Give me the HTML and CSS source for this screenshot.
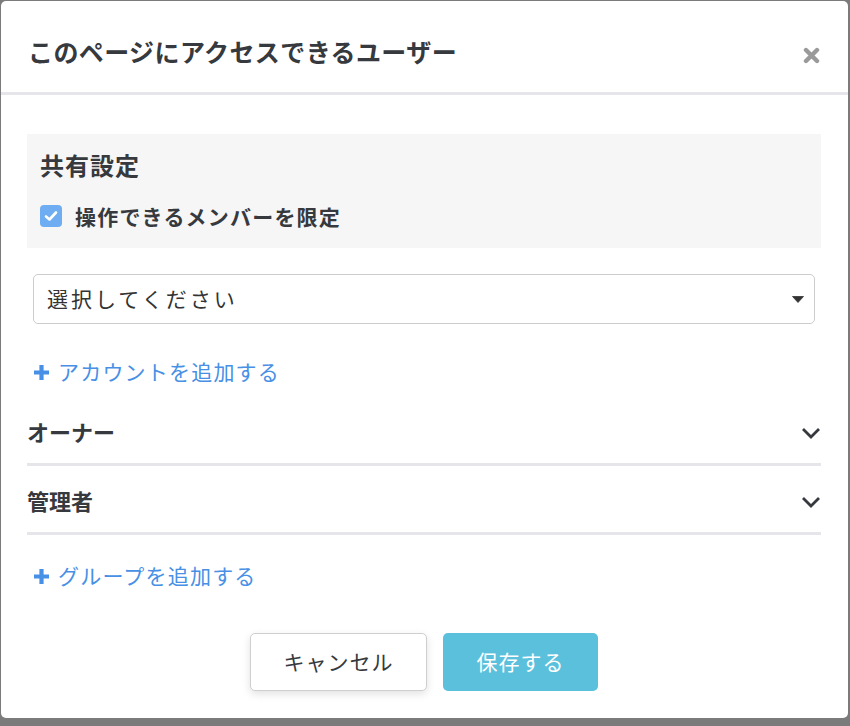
FILE: index.html
```html
<!DOCTYPE html>
<html lang="ja">
<head>
  <meta charset="UTF-8" />
  <meta name="viewport" content="width=device-width, initial-scale=1.0" />
  <title>アクセス設定</title>
  <link rel="stylesheet" href="styles.css">
</head>
<body>
  <div class="modal">
    <div class="modal-header">
      <h1>このページにアクセスできるユーザー</h1>
      <button class="close-button" aria-label="閉じる">
        <svg width="17" height="17" viewBox="0 0 17 17">
          <path d="M3 3 L14 14 M14 3 L3 14" stroke="#9a9a9a" stroke-width="4.4" stroke-linecap="round" fill="none"/>
        </svg>
      </button>
    </div>

    <div class="modal-body">
      <div class="share-box">
        <h2>共有設定</h2>
        <label class="check-row">
          <span class="checkbox">
            <svg width="14" height="12" viewBox="0 0 14 12">
              <path d="M2 6.5 L5.5 9.5 L12 2.5" stroke="#fff" stroke-width="2.6" stroke-linecap="round" stroke-linejoin="round" fill="none"/>
            </svg>
          </span>
          操作できるメンバーを限定
        </label>
      </div>

      <div class="select-box">
        <span class="select-text">選択してください</span>
        <svg width="12" height="7" viewBox="0 0 12 7">
          <path d="M0.5 0.5 H11.5 L6 6.5 Z" fill="#333" stroke="#333" stroke-width="0.8" stroke-linejoin="round"/>
        </svg>
      </div>

      <a class="add-link" href="#">
        <svg class="plus" width="17" height="17" viewBox="0 0 17 17">
          <path d="M8.5 1 V16 M1 8.5 H16" stroke="#4790e5" stroke-width="4.2" fill="none"/>
        </svg>
        アカウントを追加する
      </a>

      <div class="role-row">
        <span>オーナー</span>
        <svg width="20" height="12" viewBox="0 0 20 12">
          <path d="M2 2 L10 10 L18 2" stroke="#36393d" stroke-width="2.8" fill="none"/>
        </svg>
      </div>
      <div class="role-row">
        <span>管理者</span>
        <svg width="20" height="12" viewBox="0 0 20 12">
          <path d="M2 2 L10 10 L18 2" stroke="#36393d" stroke-width="2.8" fill="none"/>
        </svg>
      </div>

      <a class="add-link group-link" href="#">
        <svg class="plus" width="17" height="17" viewBox="0 0 17 17">
          <path d="M8.5 1 V16 M1 8.5 H16" stroke="#4790e5" stroke-width="4.2" fill="none"/>
        </svg>
        グループを追加する
      </a>

      <div class="modal-footer">
        <button class="cancel-button">キャンセル</button>
        <button class="save-button">保存する</button>
      </div>
    </div>
  </div>
</body>
</html>
```

FILE: styles.css
```css
* {
  margin: 0;
  padding: 0;
  box-sizing: border-box;
}

body {
  font-family: "Noto Sans CJK JP", "Noto Sans", sans-serif;
  background-color: #7b7b7b;
  height: 100vh;
  overflow: hidden;
  padding: 1px 2px 0 1px;
  color: #36393d;
}

.modal {
  background: #fff;
  border-radius: 5px;
}

.modal-header {
  display: flex;
  justify-content: space-between;
  align-items: center;
  padding: 35px 28px 26px 27px;
  border-bottom: 3px solid #e6e6ea;
}

.modal-header h1 {
  font-size: 25px;
  line-height: 30px;
  font-weight: bold;
  letter-spacing: 0.4px;
}

.close-button {
  background: none;
  border: none;
  cursor: pointer;
  display: flex;
  margin-top: 9px;
}

.modal-body {
  padding: 39px 27px 27px 26px;
}

.share-box {
  background: #f6f6f6;
  padding: 17px 13px 18px;
}

.share-box h2 {
  font-size: 24px;
  line-height: 28px;
  font-weight: bold;
  letter-spacing: 1px;
}

.check-row {
  display: flex;
  align-items: center;
  margin-top: 23px;
  font-size: 21px;
  line-height: 28px;
  font-weight: bold;
  letter-spacing: 1.2px;
}

.checkbox {
  width: 22px;
  height: 22px;
  border-radius: 4px;
  background: #6fadf2;
  display: flex;
  align-items: center;
  justify-content: center;
  margin-right: 13px;
}

.select-box {
  display: flex;
  justify-content: space-between;
  align-items: center;
  height: 50px;
  margin: 26px 6px 0;
  padding: 0 10px 0 13px;
  border: 1px solid #cccccc;
  border-radius: 5px;
}

.select-text {
  font-size: 21px;
  letter-spacing: 3px;
  color: #333;
  padding-bottom: 3px;
}

.add-link {
  display: flex;
  align-items: center;
  margin: 33px 6px 0;
  font-size: 21px;
  line-height: 28px;
  letter-spacing: 1.2px;
  color: #4790e5;
  text-decoration: none;
}

.plus {
  margin-right: 8px;
  margin-top: 3px;
}

.role-row {
  display: flex;
  justify-content: space-between;
  align-items: center;
  padding: 20px 0 18px;
  border-bottom: 3px solid #e6e6ea;
  font-size: 22px;
  line-height: 28px;
  font-weight: bold;
}

.role-row svg {
  margin-top: 3px;
}

.add-link + .role-row {
  margin-top: 12px;
}

.group-link {
  margin-top: 26px;
}

.modal-footer {
  display: flex;
  justify-content: center;
  gap: 16px;
  margin-top: 44px;
}

button {
  font-family: inherit;
}

.cancel-button,
.save-button {
  height: 58px;
  border-radius: 5px;
  font-size: 21px;
  letter-spacing: 1px;
  cursor: pointer;
  padding-bottom: 2px;
}

.cancel-button {
  width: 177px;
  background: #fff;
  color: #36393d;
  border: 1px solid #cfcfcf;
  box-shadow: 0 3px 8px rgba(0, 0, 0, 0.12);
}

.save-button {
  width: 155px;
  background: #5bc0dc;
  color: #fff;
  border: none;
}
```
